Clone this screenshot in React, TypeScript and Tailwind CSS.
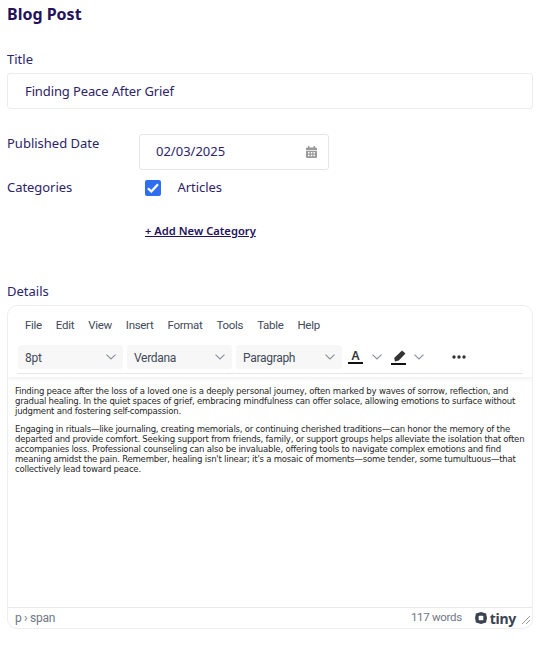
import React from "react";

const Chevron = () => (
  <svg width="10" height="6" viewBox="0 0 10 6" fill="none" stroke="#8a8f99" strokeWidth="1.1"><path d="M0.5 0.7 5 5 9.5 0.7" /></svg>
);

function Sel({ label, w }: { label: string; w: string }) {
  return (
    <div className={`${w} h-[24px] rounded-[3px] bg-[#f7f7f7] flex items-center justify-between pl-[7px] pr-[7px] text-[12px] text-[#3f4a5a]`}>
      <span className="pt-[1px]">{label}</span>
      <Chevron />
    </div>
  );
}

export default function App() {
  return (
    <div className="w-[540px] h-[654px] bg-white font-['Noto_Sans',sans-serif] text-[#2d2466] text-[13px] overflow-hidden">
      <div className="pl-[7px] pr-[7px]">
        <h1 className="text-[16px] leading-[20px] font-bold text-[#24125a] pt-[4px]">Blog Post</h1>
        <div className="mt-[26px] leading-[18px]">Title</div>
        <div className="mt-[5px] h-[36px] border border-[#ececec] rounded-[3px] flex items-center pl-[17px] pt-[1px] tracking-[-0.12px]">Finding Peace After Grief</div>
        <div className="mt-[25px] flex items-start">
          <div className="w-[132px] leading-[18px] pt-0">Published Date</div>
          <div className="w-[190px] h-[36px] border border-[#e6e6e6] rounded-[3px] flex items-center justify-between pl-[16px] pr-[11px]">
            <span>02/03/2025</span>
            <svg width="11" height="12" viewBox="0 0 11 12" fill="#9a9a9a"><path d="M2 0h1.500v1.500H7.500V0H9v1.500h1A1 1 0 0 1 11 2.500V4H0V2.500A1 1 0 0 1 1 1.500h1z" /><path fillRule="evenodd" d="M0 4.800h11V11a1 1 0 0 1-1 1H1a1 1 0 0 1-1-1zM2 6v1.500h1.500V6zM4.800 6v1.500h1.500V6zM7.500 6v1.500H9V6zM2 8.800v1.500h1.500V8.800zM4.800 8.800v1.500h1.500V8.800zM7.500 8.800v1.500H9V8.800z" /></svg>
          </div>
        </div>
        <div className="mt-[9px] flex items-center h-[18px] tracking-[-0.05px]">
          <div className="w-[137.500px]">Categories</div>
          <div className="w-[16px] h-[16px] rounded-[2px] bg-[#2f6fed] flex items-center justify-center">
            <svg width="12" height="10" viewBox="0 0 12 10" fill="none" stroke="#fff" strokeWidth="2.200"><path d="M1 5.200 4.300 8.500 11 1.200" /></svg>
          </div>
          <span className="ml-[17px]">Articles</span>
        </div>
        <div className="mt-[26px] pl-[138px] leading-[16px] text-[11.200px] font-semibold underline text-[#24125a]">+ Add New Category</div>
        <div className="mt-[43px] leading-[18px]">Details</div>
        <div className="mt-[5px] h-[324px] border border-[#eeeeee] rounded-[10px] flex flex-col overflow-hidden font-['Roboto',sans-serif] tracking-[-0.3px]">
          <div className="shadow-[0_2px_4px_rgba(0,0,0,0.06)] px-[9px] pb-[3px]">
            <div className="flex h-[38px] items-center gap-[14px] pl-[8px] pt-[1px] text-[11.500px] text-[#3f4a5a]">
              {["File", "Edit", "View", "Insert", "Format", "Tools", "Table", "Help"].map((m) => <span key={m}>{m}</span>)}
            </div>
            <div className="flex items-center h-[30px] border-b border-[#e6e6e6] pb-[4px] pt-[1px] pl-[1px] gap-[4px] mt-0">
              <Sel label="8pt" w="w-[105px]" />
              <Sel label="Verdana" w="w-[105px]" />
              <Sel label="Paragraph" w="w-[106px]" />
              <div className="ml-[2px] flex items-center gap-[9px]">
                <div className="flex flex-col items-center w-[15px]">
                  <span className="text-[12px] leading-[12px] font-['Noto_Sans',sans-serif] font-semibold text-[#333]">A</span>
                  <span className="w-[15px] h-[2px] bg-[#111]" />
                </div>
                <Chevron />
              </div>
              <div className="ml-[5px] flex items-center gap-[8px]">
                <svg width="15" height="15" viewBox="0 0 15 15" fill="#333"><path d="M11 0.500 14.500 3.500 7.800 10.500 4 11.500 3.200 8z" /><rect y="13" width="15" height="2" fill="#111" /></svg>
                <Chevron />
              </div>
              <svg className="ml-[24px]" width="14" height="4" viewBox="0 0 14 4" fill="#333"><circle cx="2" cy="2" r="1.700" /><circle cx="7" cy="2" r="1.700" /><circle cx="12" cy="2" r="1.700" /></svg>
            </div>
          </div>
          <div className="flex-1 px-[7px] pt-[9px] font-['DejaVu_Sans',Verdana,sans-serif] [font-stretch:condensed] tracking-[-0.22px] whitespace-nowrap text-[9.500px] leading-[10px] text-[#1f1f1f]">
            <p>Finding peace after the loss of a loved one is a deeply personal journey, often marked by waves of sorrow, reflection, and<br />gradual healing. In the quiet spaces of grief, embracing mindfulness can offer solace, allowing emotions to surface without<br />judgment and fostering self-compassion.</p>
            <p className="mt-[8px]">Engaging in rituals—like journaling, creating memorials, or continuing cherished traditions—can honor the memory of the<br />departed and provide comfort. Seeking support from friends, family, or support groups helps alleviate the isolation that often<br />accompanies loss. Professional counseling can also be invaluable, offering tools to navigate complex emotions and find<br />meaning amidst the pain. Remember, healing isn't linear; it's a mosaic of moments—some tender, some tumultuous—that<br />collectively lead toward peace.</p>
          </div>
          <div className="h-[21px] border-t border-[#e8e8e8] flex items-center pl-[7px] pr-[2px] text-[12px] text-[#6f7785]">
            <span>p › span</span>
            <span className="ml-auto text-[11.500px]">117 words</span>
            <span className="ml-[13px] flex items-center gap-[3px] font-['Noto_Sans',sans-serif] tracking-[-0.3px] font-bold text-[14px] text-[#3b4352]">
              <svg width="12" height="12" viewBox="0 0 13 13"><path d="M6.500 0 12 1.500 13 6.500 12 11.500 6.500 13 1 11.500 0 6.500 1 1.500z" fill="#3b4352" /><rect x="4" y="4" width="5" height="5" rx="1" fill="#fff" /></svg>
              tiny
            </span>
            <svg className="ml-[6px] mt-[4px]" width="8" height="8" viewBox="0 0 8 8" stroke="#999" strokeWidth="1"><path d="M8 0 0 8M8 4 4 8" /></svg>
          </div>
        </div>
      </div>
    </div>
  );
}
